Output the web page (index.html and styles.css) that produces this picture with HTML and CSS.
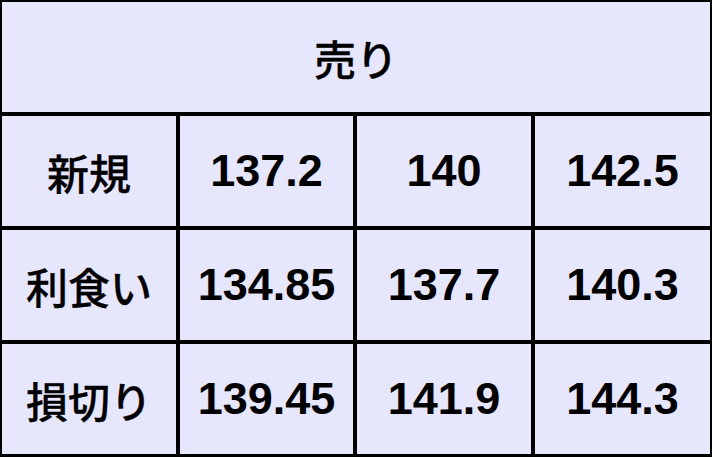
FILE: index.html
```html
<!DOCTYPE html>
<html lang="ja">
<head>
<meta charset="utf-8">
<link rel="stylesheet" href="styles.css">
</head>
<body>
<div class="grid">
  <div class="cell head jp">売り</div>
  <div class="cell jp">新規</div>
  <div class="cell num">137.2</div>
  <div class="cell num">140</div>
  <div class="cell num">142.5</div>
  <div class="cell jp">利食い</div>
  <div class="cell num">134.85</div>
  <div class="cell num">137.7</div>
  <div class="cell num">140.3</div>
  <div class="cell jp">損切り</div>
  <div class="cell num">139.45</div>
  <div class="cell num">141.9</div>
  <div class="cell num">144.3</div>
</div>
</body>
</html>
```
FILE: styles.css
```css
html, body {
  margin: 0;
  padding: 0;
  background: #ffffff;
}
.grid {
  width: 712px;
  height: 457px;
  box-sizing: border-box;
  background: #000000;
  padding: 2px 2px 4px 2px;
  display: grid;
  grid-template-columns: 174px 173px 174px 175px;
  grid-template-rows: 110px 110px 110px 110px;
  column-gap: 4px;
  row-gap: 4px;
}
.cell {
  background: #e6e6fc;
  display: flex;
  align-items: center;
  justify-content: center;
  color: #000;
}
.head {
  grid-column: 1 / 5;
}
.jp {
  font-family: "Noto Sans CJK JP", "Liberation Sans", sans-serif;
  font-size: 42px;
  font-weight: 500;
  -webkit-text-stroke: 0.3px #000;
}
.num {
  font-family: "Liberation Sans", "Noto Sans CJK JP", sans-serif;
  font-size: 45px;
  font-weight: 700;
}
```
